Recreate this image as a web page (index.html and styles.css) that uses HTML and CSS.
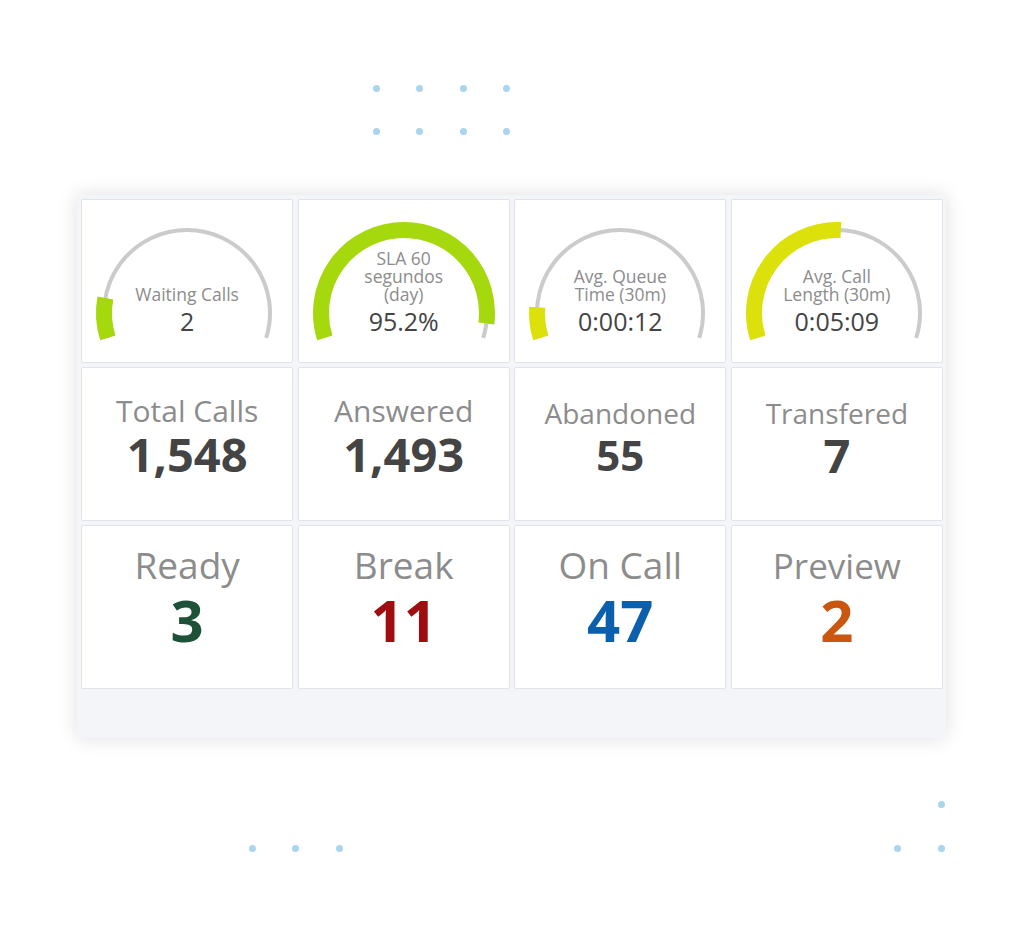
FILE: index.html
```html
<!DOCTYPE html>
<html lang="en">
<head>
<meta charset="UTF-8" />
<meta name="viewport" content="width=device-width, initial-scale=1.0" />
<title>Call Center – Live Stats</title>

<link rel="stylesheet" href="styles.css">
</head>
<body>

<!-- decorative dots, top -->
<div class="dots dots-top">
  <i></i><i></i><i></i><i></i>
  <i></i><i></i><i></i><i></i>
</div>

<main class="panel">

  <!-- gauges ------------------------------------------------ -->
  <div class="card gauge">
    <svg viewBox="0 0 210 162" width="210" height="162">
      <path class="track" d="M25.84 137.96A83 83 0 1 1 184.16 137.96" />
      <path class="fill green" pathLength="100" stroke-dasharray="13 200" d="M25.84 137.96A83 83 0 1 1 184.16 137.96" />
    </svg>
    <div class="gauge-text">
      <span class="gauge-label">Waiting Calls</span>
      <span class="gauge-value">2</span>
    </div>
  </div>

  <div class="card gauge">
    <svg viewBox="0 0 210 162" width="210" height="162">
      <path class="track" d="M25.84 137.96A83 83 0 1 1 184.16 137.96" />
      <path class="fill green" pathLength="100" stroke-dasharray="95.2 200" d="M25.84 137.96A83 83 0 1 1 184.16 137.96" />
    </svg>
    <div class="gauge-text">
      <span class="gauge-label">SLA 60<br>segundos<br>(day)</span>
      <span class="gauge-value">95.2%</span>
    </div>
  </div>

  <div class="card gauge">
    <svg viewBox="0 0 210 162" width="210" height="162">
      <path class="track" d="M25.84 137.96A83 83 0 1 1 184.16 137.96" />
      <path class="fill yellow" pathLength="100" stroke-dasharray="10 200" d="M25.84 137.96A83 83 0 1 1 184.16 137.96" />
    </svg>
    <div class="gauge-text">
      <span class="gauge-label">Avg. Queue<br>Time (30m)</span>
      <span class="gauge-value">0:00:12</span>
    </div>
  </div>

  <div class="card gauge">
    <svg viewBox="0 0 210 162" width="210" height="162">
      <path class="track" d="M25.84 137.96A83 83 0 1 1 184.16 137.96" />
      <path class="fill yellow" pathLength="100" stroke-dasharray="51.3 200" d="M25.84 137.96A83 83 0 1 1 184.16 137.96" />
    </svg>
    <div class="gauge-text">
      <span class="gauge-label">Avg. Call<br>Length (30m)</span>
      <span class="gauge-value">0:05:09</span>
    </div>
  </div>

  <!-- call totals ------------------------------------------- -->
  <div class="card total">
    <span class="total-label">Total Calls</span>
    <span class="total-value">1,548</span>
  </div>
  <div class="card total">
    <span class="total-label">Answered</span>
    <span class="total-value">1,493</span>
  </div>
  <div class="card total total--fit">
    <span class="total-label">Abandoned</span>
    <span class="total-value total-value--sm">55</span>
  </div>
  <div class="card total total--fit">
    <span class="total-label">Transfered</span>
    <span class="total-value">7</span>
  </div>

  <!-- agents ------------------------------------------------ -->
  <div class="card agent">
    <span class="agent-label">Ready</span>
    <span class="agent-value ready">3</span>
  </div>
  <div class="card agent">
    <span class="agent-label">Break</span>
    <span class="agent-value break">11</span>
  </div>
  <div class="card agent">
    <span class="agent-label">On Call</span>
    <span class="agent-value oncall">47</span>
  </div>
  <div class="card agent agent--fit">
    <span class="agent-label">Preview</span>
    <span class="agent-value preview">2</span>
  </div>

</main>

<!-- decorative dots, bottom -->
<div class="dots-bottom">
  <div class="dots dots-row">
    <i></i><i></i><i></i>
  </div>
  <div class="dots dots-corner">
    <b></b><i></i>
    <i></i><i></i>
  </div>
</div>

</body>
</html>
```

FILE: styles.css
```css
:root{--dot:#a9d5ef;--card-border:#e1e3ea;--panel:#f4f5f9;--label:#8c8c8c;--value:#444;}
body{margin:0;background:#fff;font-family:"Open Sans","Liberation Sans",Arial,sans-serif;color:var(--value);}

/* dots ---------------------------------------------------- */
.dots{display:grid;gap:36.5px;}
.dots i,.dots b{display:block;width:7px;height:7px;border-radius:50%;background:var(--dot);}
.dots b{background:transparent;}
.dots-top{grid-template-columns:repeat(4,7px);margin:84.5px 0 0 372.5px;}
.dots-bottom{display:flex;justify-content:space-between;align-items:flex-end;width:696px;margin:63.5px 0 0 248.5px;}
.dots-row{grid-template-columns:repeat(3,7px);}
.dots-corner{grid-template-columns:repeat(2,7px);}

/* panel --------------------------------------------------- */
.panel{
  display:grid;grid-template-columns:repeat(4,1fr);grid-template-rows:164px 154px 164px;gap:4px 4.3px;
  box-sizing:border-box;width:869px;height:543px;margin:59.5px 0 0 77px;padding:4px 3px 48px 4px;
  background:var(--panel);box-shadow:0 0 18px rgba(0,0,0,.13);
}
.card{
  box-sizing:border-box;background:#fff;border:1px solid var(--card-border);border-radius:2px;
  display:flex;flex-direction:column;align-items:center;text-align:center;
}

/* gauges -------------------------------------------------- */
.gauge{display:grid;align-items:stretch;justify-items:stretch;}
.gauge svg,.gauge-text{grid-area:1/1;}
.gauge svg{display:block;width:210px;height:162px;}
.track{fill:none;stroke:#cbcbcb;stroke-width:4;}
.fill{fill:none;stroke-width:16;}
.fill.green{stroke:#a6d80e;}
.fill.yellow{stroke:#dce10b;}
.gauge-text{display:flex;flex-direction:column;justify-content:flex-end;align-items:center;padding-bottom:26px;}
.gauge-label{font-size:17.5px;line-height:18px;color:var(--label);}
.gauge-value{font-size:25px;line-height:30px;margin-top:3px;color:var(--value);}

/* totals -------------------------------------------------- */
.total{padding-top:26px;}
.total-label{font-size:30px;line-height:34px;color:var(--label);}
.total-value{font-size:47px;line-height:52px;font-weight:700;color:var(--value);}
.total--fit{padding-top:29px;}
.total--fit .total-label{font-size:28px;line-height:32px;}
.total-value--sm{font-size:42px;line-height:48px;margin-top:2px;}

/* agents -------------------------------------------------- */
.agent{padding-top:19px;}
.agent-label{font-size:37px;line-height:40px;color:var(--label);}
.agent-value{font-size:58px;line-height:62px;font-weight:700;margin-top:4px;}
.agent--fit{padding-top:21px;}
.agent--fit .agent-label{font-size:35px;line-height:38px;}
.ready{color:#1d5239;}
.break{color:#a00d0e;}
.oncall{color:#0b5fad;}
.preview{color:#c9570f;}
```
